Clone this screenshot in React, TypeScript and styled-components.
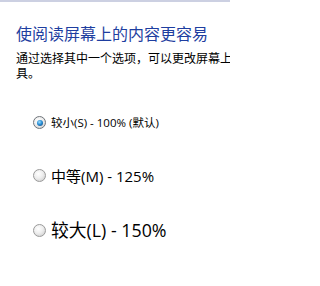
import React, { useState } from 'react';
import styled, { createGlobalStyle } from 'styled-components';

const GlobalStyle = createGlobalStyle`
  html, body {
    margin: 0;
    padding: 0;
    background: #ffffff;
  }
  body {
    font-family: "Noto Sans CJK SC", "Open Sans", sans-serif;
  }
`;

const Page = styled.div`
  width: 230px;
  height: 286px;
  overflow: hidden;
  border-top: 2px solid #ccd0e2;
  box-sizing: border-box;
  padding: 20px 0 0 16px;
`;

const Title = styled.h1`
  margin: 0;
  font-family: "Noto Sans CJK SC", sans-serif;
  font-weight: normal;
  font-size: 16px;
  line-height: 22px;
  color: #1e3ea0;
  white-space: nowrap;
`;

// the sentence is wider than the window: only its start and the wrapped tail show
const Description = styled.p`
  margin: 6px 0 0;
  width: 566px;
  font-size: 12px;
  line-height: 15px;
  color: #000000;
`;

const Options = styled.div`
  display: flex;
  flex-direction: column;
  padding: 36px 0 0 17px;
`;

const OptionRow = styled.label<{ $gap: number }>`
  display: flex;
  align-items: center;
  gap: 5px;
  cursor: pointer;
  margin-bottom: ${({ $gap }) => $gap}px;
`;

const Radio = styled.span<{ $checked: boolean }>`
  flex: none;
  width: 11px;
  height: 11px;
  border-radius: 50%;
  border: 1px solid ${({ $checked }) => ($checked ? '#6f747a' : '#9a9a9a')};
  background: radial-gradient(circle at 40% 35%, #ffffff 0%, #eeeeee 45%, #c6c6c6 100%);
  display: flex;
  align-items: center;
  justify-content: center;
  &::after {
    content: '';
    display: ${({ $checked }) => ($checked ? 'block' : 'none')};
    width: 6px;
    height: 6px;
    border-radius: 50%;
    background: radial-gradient(circle at 40% 35%, #9fe0ff 0%, #2a8fd6 45%, #0d3d70 100%);
  }
`;

const OptionText = styled.span<{ $size: number }>`
  font-family: "Open Sans", "Noto Sans CJK SC", sans-serif;
  font-size: ${({ $size }) => $size}px;
  line-height: 1.2;
  color: #000000;
  white-space: nowrap;
`;

const options = [
  { label: '较小(S) - 100% (默认)', size: 11.5, gap: 37 },
  { label: '中等(M) - 125%', size: 15, gap: 35 },
  { label: '较大(L) - 150%', size: 17.8, gap: 0 },
];

const App: React.FC = () => {
  const [selected, setSelected] = useState(0);

  return (
    <>
      <GlobalStyle />
      <Page>
        <Title>使阅读屏幕上的内容更容易</Title>
        <Description>
          通过选择其中一个选项，可以更改屏幕上文本和其他项目的大小。若要暂时放大部分屏幕，请使用放大镜工具。
        </Description>
        <Options>
          {options.map((opt, index) => (
            <OptionRow key={index} $gap={opt.gap} onClick={() => setSelected(index)}>
              <Radio $checked={selected === index} />
              <OptionText $size={opt.size}>{opt.label}</OptionText>
            </OptionRow>
          ))}
        </Options>
      </Page>
    </>
  );
};

export default App;
